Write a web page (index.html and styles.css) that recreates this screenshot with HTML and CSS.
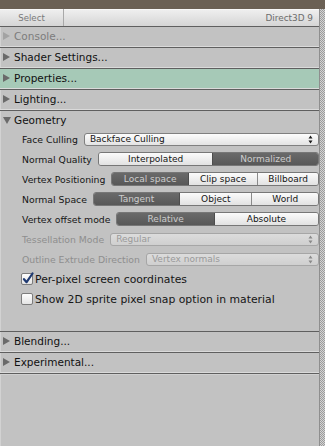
FILE: index.html
```html
<!DOCTYPE html>
<html>
<head>
<meta charset="utf-8">
<link rel="stylesheet" href="styles.css">
</head>
<body>
<div class="titlebar"></div>
<div class="frame">
  <div class="main">
    <div class="toolbar">
      <div class="tb-select">Select</div>
      <div class="tb-api">Direct3D 9</div>
    </div>

    <div class="header disabled">
      <svg class="tri" width="7" height="8" viewBox="0 0 7 8"><path d="M0 0L7 4L0 8Z"/></svg>
      <span>Console...</span>
    </div>
    <div class="header">
      <svg class="tri" width="7" height="8" viewBox="0 0 7 8"><path d="M0 0L7 4L0 8Z"/></svg>
      <span>Shader Settings...</span>
    </div>
    <div class="header active">
      <svg class="tri" width="7" height="8" viewBox="0 0 7 8"><path d="M0 0L7 4L0 8Z"/></svg>
      <span>Properties...</span>
    </div>
    <div class="header">
      <svg class="tri" width="7" height="8" viewBox="0 0 7 8"><path d="M0 0L7 4L0 8Z"/></svg>
      <span>Lighting...</span>
    </div>
    <div class="header open">
      <svg class="tri-down" width="8" height="7" viewBox="0 0 8 7"><path d="M0 0L8 0L4 7Z"/></svg>
      <span>Geometry</span>
    </div>

    <div class="content">
      <div class="row">
        <span class="label">Face Culling</span>
        <div class="dropdown">
          <span>Backface Culling</span>
          <svg class="updown" width="5" height="9" viewBox="0 0 5 9"><path d="M0.5 3.5L2.5 0.5L4.5 3.5Z M0.5 5.5L2.5 8.5L4.5 5.5Z"/></svg>
        </div>
      </div>
      <div class="row">
        <span class="label">Normal Quality</span>
        <div class="seg seg-nq">
          <span class="opt">Interpolated</span>
          <span class="opt on">Normalized</span>
        </div>
      </div>
      <div class="row">
        <span class="label">Vertex Positioning</span>
        <div class="seg seg-vp">
          <span class="opt on">Local space</span>
          <span class="opt">Clip space</span>
          <span class="opt">Billboard</span>
        </div>
      </div>
      <div class="row">
        <span class="label">Normal Space</span>
        <div class="seg seg-ns">
          <span class="opt on">Tangent</span>
          <span class="opt">Object</span>
          <span class="opt">World</span>
        </div>
      </div>
      <div class="row">
        <span class="label">Vertex offset mode</span>
        <div class="seg seg-vo">
          <span class="opt on">Relative</span>
          <span class="opt">Absolute</span>
        </div>
      </div>
      <div class="row dim">
        <span class="label">Tessellation Mode</span>
        <div class="dropdown">
          <span>Regular</span>
          <svg class="updown" width="5" height="9" viewBox="0 0 5 9"><path d="M0.5 3.5L2.5 0.5L4.5 3.5Z M0.5 5.5L2.5 8.5L4.5 5.5Z"/></svg>
        </div>
      </div>
      <div class="row dim">
        <span class="label">Outline Extrude Direction</span>
        <div class="dropdown">
          <span>Vertex normals</span>
          <svg class="updown" width="5" height="9" viewBox="0 0 5 9"><path d="M0.5 3.5L2.5 0.5L4.5 3.5Z M0.5 5.5L2.5 8.5L4.5 5.5Z"/></svg>
        </div>
      </div>
      <label class="row check">
        <span class="box">
          <svg width="14" height="14" viewBox="0 0 14 14"><path d="M3 7.2L5.6 10.2L11.5 1.5" /></svg>
        </span>
        <span class="check-text">Per-pixel screen coordinates</span>
      </label>
      <label class="row check">
        <span class="box"></span>
        <span class="check-text">Show 2D sprite pixel snap option in material</span>
      </label>
    </div>

    <div class="header">
      <svg class="tri" width="7" height="8" viewBox="0 0 7 8"><path d="M0 0L7 4L0 8Z"/></svg>
      <span>Blending...</span>
    </div>
    <div class="header">
      <svg class="tri" width="7" height="8" viewBox="0 0 7 8"><path d="M0 0L7 4L0 8Z"/></svg>
      <span>Experimental...</span>
    </div>
    <div class="filler"></div>
  </div>
  <div class="scroll"></div>
</div>
</body>
</html>
```
FILE: styles.css
```css
html, body {
  margin: 0;
  padding: 0;
}
body {
  width: 325px;
  height: 446px;
  overflow: hidden;
  background: #c2c2c2;
  font-family: "DejaVu Sans", sans-serif;
  color: #151515;
}
.titlebar {
  height: 9px;
  background: #6b6054;
}
.frame {
  display: flex;
  height: 437px;
}
.main {
  width: 320px;
  display: flex;
  flex-direction: column;
  background: #c2c2c2;
  box-shadow: inset 1px 0 0 #d2d2d2;
}
.scroll {
  width: 5px;
  background: repeating-conic-gradient(#9c9c9c 0 25%, #d3d3d3 0 50%) 0 0 / 2px 2px;
  border-left: 1px solid #8e8e8e;
  margin-left: -1px;
}

/* toolbar */
.toolbar {
  height: 17px;
  display: flex;
  align-items: center;
  background: linear-gradient(#f0f0f0, #d5d5d5);
  box-shadow: inset 0 1px 0 #f8f8f8;
  font-size: 8.6px;
  color: #7a7a7a;
}
.tb-select {
  width: 64px;
  height: 100%;
  display: flex;
  align-items: center;
  justify-content: center;
  border-right: 1px solid #a9a9a9;
  box-sizing: border-box;
}
.tb-api {
  margin-left: auto;
  padding-right: 7px;
  color: #6c6c6c;
  font-size: 8.9px;
}

/* foldout headers */
.header {
  height: 21px;
  box-sizing: border-box;
  display: flex;
  align-items: center;
  padding: 0 0 2px 3px;
  border-top: 1px solid #5f5f5f;
  border-bottom: 1px solid #dadada;
  font-size: 10.5px;
  color: #111;
}
.header .tri {
  fill: #6a6a6a;
  margin-right: 4px;
  flex: none;
}
.header .tri-down {
  fill: #6a6a6a;
  margin-right: 3px;
  flex: none;
}
.header.disabled {
  color: #7c7c7c;
}
.header.disabled .tri {
  fill: #a3a3a3;
}
.header.active {
  background: #a6c9b7;
}
.header.open {
  height: 19px;
  border-bottom: none;
  padding-bottom: 0;
}

/* content */
.content {
  padding: 0 1px 22px 22px;
}
.row {
  height: 20px;
  display: flex;
  align-items: center;
  gap: 6px;
}
.label {
  font-size: 9.3px;
  color: #151515;
  white-space: nowrap;
  flex: none;
}
.row.dim .label {
  color: #8e8e8e;
}

.dropdown {
  flex: 1;
  height: 13px;
  box-sizing: border-box;
  display: flex;
  align-items: center;
  padding: 0 5px 0 5px;
  border: 1px solid #808080;
  border-radius: 3px;
  background: linear-gradient(#fdfdfd, #e3e3e3);
  font-size: 9px;
  color: #151515;
}
.dropdown .updown {
  margin-left: auto;
  fill: #1a1a1a;
}
.row.dim .dropdown {
  border-color: #a6a6a6;
  background: linear-gradient(#dcdcdc, #cfcfcf);
  color: #9a9a9a;
}
.row.dim .dropdown .updown {
  fill: #8a8a8a;
}

.seg {
  flex: 1;
  height: 14px;
  box-sizing: border-box;
  display: grid;
  border: 1px solid #777;
  border-radius: 3px;
  overflow: hidden;
  font-size: 9px;
}
.seg-nq { grid-template-columns: 115fr 107fr; }
.seg-vp { grid-template-columns: 76fr 70fr 61fr; }
.seg-ns { grid-template-columns: 87fr 74fr 68fr; }
.seg-vo { grid-template-columns: 99fr 107fr; }
.opt {
  display: flex;
  align-items: center;
  justify-content: center;
  background: linear-gradient(#fbfbfb, #e2e2e2);
  color: #151515;
  border-left: 1px solid #8a8a8a;
  white-space: nowrap;
}
.opt:first-child {
  border-left: none;
}
.opt.on {
  background: linear-gradient(#6a6a6a, #585858);
  color: #cdcdcd;
  border-left-color: #4d4d4d;
}
.opt.on + .opt {
  border-left-color: #4d4d4d;
}

/* checkboxes */
.check {
  gap: 2px;
  margin-left: -1px;
}
.box {
  width: 12px;
  height: 12px;
  box-sizing: border-box;
  border: 1px solid #7d7d7d;
  border-radius: 2px;
  background: linear-gradient(#fefefe, #e4e4e4);
  position: relative;
  flex: none;
}
.box svg {
  position: absolute;
  left: -1px;
  top: -2px;
  fill: none;
  stroke: #1f3a72;
  stroke-width: 2.2;
  stroke-linecap: round;
  stroke-linejoin: round;
}
.check-text {
  font-size: 10.8px;
  color: #151515;
  white-space: nowrap;
}

.filler {
  flex: 1;
  border-top: 1px solid #5f5f5f;
  box-shadow: inset 0 1px 0 #d0d0d0;
}
```
